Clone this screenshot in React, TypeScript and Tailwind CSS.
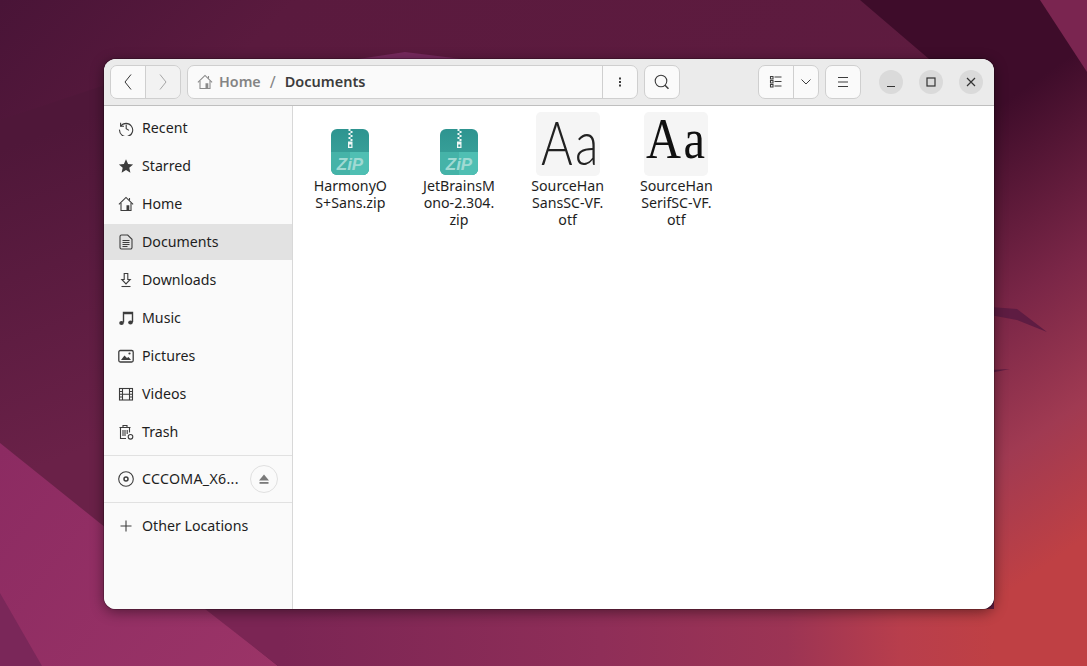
import React from "react";

const I = ({ children, cls = "w-4 h-4 text-[#3d3d3d]" }: { children: React.ReactNode; cls?: string }) => (
  <svg viewBox="0 0 16 16" className={cls} fill="none" stroke="currentColor" strokeWidth={1.1}>
    {children}
  </svg>
);

const homeGlyph = (
  <>
    <path d="M.9 8.400L8 1.400l7.100 7" />
    <path d="M3 7v7.500h10V7" />
    <path d="M8.500 9.200h2.800v5.300H8.500z" fill="currentColor" stroke="none" />
    <path d="M11.500 2v2.500" />
  </>
);

const icons: Record<string, React.ReactNode> = {
  recent: (
    <I>
      <path d="M2.600 2.800V6.200H6" />
      <path d="M2.700 6.200A6.600 6.600 0 1 1 1.500 9.600" />
      <path d="M8.200 4.400V8.600L11 10.400" />
    </I>
  ),
  star: (
    <I>
      <path
        d="M8 1.200l2.100 4.700 5 .5-3.800 3.300 1.100 5L8 12.100l-4.400 2.600 1.100-5L.9 6.400l5-.5z"
        fill="currentColor"
        stroke="none"
      />
    </I>
  ),
  home: <I>{homeGlyph}</I>,
  doc: (
    <I>
      <path d="M3.500 1h6.200L14 5.300v8.200a1.500 1.500 0 0 1-1.500 1.500h-9A1.500 1.500 0 0 1 2 13.500V2.500A1.500 1.500 0 0 1 3.500 1z" />
      <path d="M4.500 6.500h7M4.500 8.500h7M4.500 10.500h7M4.500 12.500h5" />
    </I>
  ),
  down: (
    <I>
      <path d="M6.200 1.500h3.600v6h2.400L8 12 3.800 7.500h2.400z" />
      <path d="M3.500 14.500h9" />
    </I>
  ),
  music: (
    <I>
      <path d="M5.500 12.500V2.500h9v9.500M5.500 3.500h9" strokeWidth={1.4} />
      <ellipse cx="3.500" cy="13" rx="2.300" ry="1.900" fill="currentColor" stroke="none" />
      <ellipse cx="12.500" cy="12.500" rx="2.300" ry="1.900" fill="currentColor" stroke="none" />
    </I>
  ),
  pic: (
    <I>
      <rect x="0.800" y="2.500" width="14.400" height="11.500" rx="1.500" strokeWidth={1.3} />
      <path d="M3 12l3.500-4.500 2.500 2.500 1.500-1 2.500 3z" fill="currentColor" stroke="none" />
      <circle cx="11.500" cy="5.500" r="1.100" fill="currentColor" stroke="none" />
    </I>
  ),
  video: (
    <I>
      <rect x="1.500" y="2.500" width="13" height="11.500" />
      <path d="M4.500 2.500v11.500M11.500 2.500v11.500M1.500 5.500h3M1.500 8.200h3M1.500 11h3M11.500 5.500h3M11.500 8.200h3M11.500 11h3M4.500 8.200h7" />
    </I>
  ),
  trash: (
    <I>
      <path d="M1.500 3.500h11M5 3.500V1.500h4v2" />
      <path d="M2.500 3.500v11h5.500M11.500 3.500v5" />
      <path d="M5 6v6M7 6v6M9.200 6v4" />
      <circle cx="12.500" cy="12.800" r="2.300" />
    </I>
  ),
  disc: (
    <I>
      <circle cx="8" cy="8" r="7.300" />
      <circle cx="8" cy="8" r="2" strokeWidth={1.5} />
    </I>
  ),
  plus: (
    <I>
      <path d="M8 2.500v11M2.500 8h11" />
    </I>
  ),
};

const Row = ({ icon, label, active }: { icon: string; label: string; active?: boolean }) => (
  <div className={`h-9 flex items-center pl-[14px] gap-[8px] ${active ? "bg-[#e2e2e2]" : ""}`}>
    {icons[icon]}
    <span className="text-[14.2px] text-[#1e1e1e]">{label}</span>
  </div>
);

const Sep = () => <div className="h-px bg-[#e1e1e1] my-[5px]" />;

const Zip = () => (
  <svg viewBox="0 0 38 46" className="w-[38px] h-[46px] mb-px">
    <defs>
      <linearGradient id="z1" x1="0" y1="0" x2="0" y2="1">
        <stop offset="0" stopColor="#2e9490" />
        <stop offset="1" stopColor="#3fa99f" />
      </linearGradient>
    </defs>
    <rect width="38" height="46" rx="6" fill="url(#z1)" />
    <path d="M0 23h38v17a6 6 0 0 1-6 6H6a6 6 0 0 1-6-6z" fill="#45b3a8" />
    <path d="M19 23h19v17a6 6 0 0 1-6 6H19z" fill="#4fbfb3" />
    <path d="M17.500 0h2v2h-2zM19.500 2h2v2h-2zM17.500 4h2v2h-2zM19.500 6h2v2h-2zM17.500 8h2v2h-2zM19.500 10h2v2h-2z" fill="#f2f7f6" />
    <path d="M17 12.500h4.500V19H17z" fill="#f2f7f6" />
    <rect x="18.300" y="15.500" width="2" height="2.200" fill="#2e9490" />
    <text
      x="19"
      y="40.500"
      textAnchor="middle"
      fontFamily="'Liberation Sans', sans-serif"
      fontWeight="700"
      fontStyle="italic"
      fontSize="17"
      fill="#a0dad3"
    >
      ZiP
    </text>
  </svg>
);

const Item = ({ preview, lines }: { preview: React.ReactNode; lines: string[] }) => (
  <div className="w-[108.67px] flex flex-col items-center pt-[6px]">
    <div className="h-[64px] flex items-end justify-center">{preview}</div>
    <div className="mt-px text-center text-[14.2px] leading-[17px] text-[#1e1e1e]">
      {lines.map((l) => (
        <div key={l} className="whitespace-nowrap">
          {l}
        </div>
      ))}
    </div>
  </div>
);

const Aa = ({ serif }: { serif?: boolean }) => (
  <div className="w-16 h-16 rounded-[5px] bg-[#f5f5f5] overflow-hidden flex items-start">
    {serif ? (
      <span className="[font-family:Liberation_Serif,serif] text-[57px] leading-[64px] text-[#111] whitespace-nowrap ml-[2px] -mt-[5px] tracking-[3px] origin-left scale-x-[0.85]">
        Aa
      </span>
    ) : (
      <span className="[font-family:Lato,sans-serif] font-light text-[62px] leading-[64px] text-[#222] whitespace-nowrap ml-[5px] -mt-[3px] tracking-[3px] origin-left scale-x-[0.78]">
        Aa
      </span>
    )}
  </div>
);

const Ctl = ({ children }: { children: React.ReactNode }) => (
  <div className="w-6 h-6 rounded-full bg-[#dadada] flex items-center justify-center">{children}</div>
);

export default function App() {
  return (
    <div className="relative w-[1087px] h-[666px] overflow-hidden [font-family:Noto_Sans,sans-serif] bg-[#5a1a3e]">
      <svg viewBox="0 0 1087 666" className="absolute inset-0 w-full h-full">
        <defs>
          <linearGradient id="b0" x1="0" y1="0" x2="1" y2="0.6">
            <stop offset="0" stopColor="#491437" />
            <stop offset="0.2" stopColor="#5a1a3e" />
            <stop offset="1" stopColor="#611c40" />
          </linearGradient>
          <linearGradient id="b1" gradientUnits="userSpaceOnUse" x1="381" y1="542" x2="613" y2="871">
            <stop offset="0" stopColor="#3e0c2a" />
            <stop offset="0.42" stopColor="#7a2647" />
            <stop offset="0.72" stopColor="#a03a52" />
            <stop offset="1" stopColor="#bf4044" />
          </linearGradient>
          <linearGradient id="b2" gradientUnits="userSpaceOnUse" x1="280" y1="0" x2="994" y2="0">
            <stop offset="0" stopColor="#7b2554" />
            <stop offset="0.45" stopColor="#8f2e58" />
            <stop offset="0.71" stopColor="#9c3454" />
            <stop offset="0.87" stopColor="#b83e4c" />
            <stop offset="1" stopColor="#bf4044" />
          </linearGradient>
          <linearGradient id="b3" gradientUnits="userSpaceOnUse" x1="0" y1="450" x2="280" y2="666">
            <stop offset="0" stopColor="#8c2b62" />
            <stop offset="1" stopColor="#9b3467" />
          </linearGradient>
          <linearGradient id="b4" gradientUnits="userSpaceOnUse" x1="0" y1="150" x2="110" y2="440">
            <stop offset="0" stopColor="#4f1739" />
            <stop offset="1" stopColor="#6a2148" />
          </linearGradient>
        </defs>
        <rect width="1087" height="666" fill="url(#b0)" />
        <path d="M0 120L120 80L300 620H0z" fill="url(#b4)" />
        <path d="M358 59L405 52L462 59L462 70H358z" fill="#772a5e" />
        <path d="M860 0H1087V666H994V120H929V59z" fill="url(#b1)" />
        <path d="M1040 0H1087V72z" fill="#7a2550" />
        <path d="M0 443L278 666H0z" fill="url(#b3)" />
        <path d="M0 593L42 666H0z" fill="#7a2759" />
        <path d="M205 609H1000V666H278z" fill="url(#b2)" />
        <path d="M990 307L1017 309L1047 332L1017 320L990 315z" fill="#5e1c42" />
        <path d="M990 370L1010 369L990 373z" fill="#5e1c42" />
      </svg>

      <div className="absolute left-[104px] top-[59px] w-[890px] h-[550px] rounded-[12px] overflow-hidden flex flex-col bg-white shadow-[0_3px_14px_rgba(0,0,0,0.45),0_0_0_1px_rgba(0,0,0,0.2)]">
        <header className="h-[47px] shrink-0 flex items-start pt-[6px] pl-[6px] bg-[#ebebeb] border-b border-[#bfbfbf]">
          <div className="w-[71px] h-[34px] flex rounded-[7px] border border-[#cfcfcf] overflow-hidden">
            <div className="w-[35px] bg-[#fafafa] border-r border-[#cfcfcf] flex items-center justify-center">
              <svg viewBox="0 0 10 18" className="w-[10px] h-[18px]" fill="none" stroke="#333" strokeWidth={1}>
                <path d="M8 1.500L2 9l6 7.500" />
              </svg>
            </div>
            <div className="flex-1 bg-[#f2f2f2] flex items-center justify-center">
              <svg viewBox="0 0 10 18" className="w-[10px] h-[18px]" fill="none" stroke="#a5a5a5" strokeWidth={1}>
                <path d="M2 1.500L8 9l-6 7.500" />
              </svg>
            </div>
          </div>

          <div className="ml-[6px] w-[451px] h-[34px] flex rounded-[7px] border border-[#cfcfcf] overflow-hidden bg-[#fafafa]">
            <div className="flex-1 flex items-center pl-[9px]">
              <I cls="w-4 h-4 text-[#8a8a8a]">{homeGlyph}</I>
              <span className="ml-[6px] text-[14.3px] font-semibold text-[#848484]">Home</span>
              <span className="ml-[9px] text-[16px] text-[#848484]">/</span>
              <span className="ml-[9px] text-[14.5px] font-semibold text-[#3c3c3c]">Documents</span>
            </div>
            <div className="w-[35px] border-l border-[#cfcfcf] flex items-center justify-center">
              <svg viewBox="0 0 4 14" className="w-1 h-[14px]" fill="#3d3d3d">
                <rect x="1" y="2.500" width="2" height="2" />
                <rect x="1" y="6" width="2" height="2" />
                <rect x="1" y="9.500" width="2" height="2" />
              </svg>
            </div>
          </div>

          <div className="ml-[6px] w-9 h-[34px] rounded-[7px] border border-[#cfcfcf] bg-[#fafafa] flex items-center justify-center">
            <I>
              <circle cx="7" cy="7" r="5.800" />
              <path d="M11 11.200l3.500 3.500" strokeWidth={1.5} />
            </I>
          </div>

          <div className="ml-[78px] w-[61px] h-[34px] flex rounded-[7px] border border-[#cfcfcf] bg-[#fafafa] overflow-hidden">
            <div className="w-[35px] border-r border-[#cfcfcf] flex items-center justify-center">
              <I>
                <path d="M2.500 2.500H5V5H2.500zM2.500 6.500H5V9H2.500zM2.500 10.500H5V13H2.500z" />
                <path d="M6.500 3h7M6.500 7.500h7M6.500 12h7" />
              </I>
            </div>
            <div className="flex-1 flex items-center justify-center">
              <svg viewBox="0 0 12 8" className="w-3 h-2" fill="none" stroke="#3d3d3d" strokeWidth={1}>
                <path d="M1.500 1.500L6 6l4.500-4.500" />
              </svg>
            </div>
          </div>

          <div className="ml-[6px] w-9 h-[34px] rounded-[7px] border border-[#cfcfcf] bg-[#fafafa] flex items-center justify-center">
            <I>
              <path d="M3 3.500h10M3 8h10M3 12.500h10" strokeWidth={1.2} />
            </I>
          </div>

          <div className="ml-[18px] mt-[5px] flex gap-4">
            <Ctl>
              <svg viewBox="0 0 12 12" className="w-3 h-3" stroke="#333" strokeWidth={1.2}>
                <path d="M2 10.500h8" />
              </svg>
            </Ctl>
            <Ctl>
              <svg viewBox="0 0 12 12" className="w-3 h-3" fill="none" stroke="#333" strokeWidth={1.2}>
                <rect x="2" y="2" width="8" height="8" />
              </svg>
            </Ctl>
            <Ctl>
              <svg viewBox="0 0 12 12" className="w-3 h-3" stroke="#333" strokeWidth={1.2}>
                <path d="M2 2l8 8M10 2l-8 8" />
              </svg>
            </Ctl>
          </div>
        </header>

        <div className="flex-1 flex min-h-0">
          <aside className="w-[189px] shrink-0 bg-[#fafafa] border-r border-[#d8d8d8] pt-1 flex flex-col">
            <div className="flex flex-col gap-[2px]">
              <Row icon="recent" label="Recent" />
              <Row icon="star" label="Starred" />
              <Row icon="home" label="Home" />
              <Row icon="doc" label="Documents" active />
              <Row icon="down" label="Downloads" />
              <Row icon="music" label="Music" />
              <Row icon="pic" label="Pictures" />
              <Row icon="video" label="Videos" />
              <Row icon="trash" label="Trash" />
            </div>
            <Sep />
            <div className="h-9 flex items-center pl-[14px] gap-[8px]">
              {icons.disc}
              <span className="text-[14.2px] tracking-[0.3px] text-[#1e1e1e]">CCCOMA_X6...</span>
              <div className="ml-auto mr-[14px] w-7 h-7 rounded-full border border-[#e0e0e0] flex items-center justify-center">
                <svg viewBox="0 0 12 12" className="w-3 h-3" fill="#7a7a7a">
                  <path d="M6 1.500L11 7.500H1z" />
                  <rect x="1.500" y="9" width="9" height="1.800" />
                </svg>
              </div>
            </div>
            <Sep />
            <Row icon="plus" label="Other Locations" />
          </aside>

          <main className="flex-1 bg-white flex items-start pl-[3px]">
            <Item preview={<Zip />} lines={["HarmonyO", "S+Sans.zip"]} />
            <Item preview={<Zip />} lines={["JetBrainsM", "ono-2.304.", "zip"]} />
            <Item preview={<Aa />} lines={["SourceHan", "SansSC-VF.", "otf"]} />
            <Item preview={<Aa serif />} lines={["SourceHan", "SerifSC-VF.", "otf"]} />
          </main>
        </div>
      </div>
    </div>
  );
}
